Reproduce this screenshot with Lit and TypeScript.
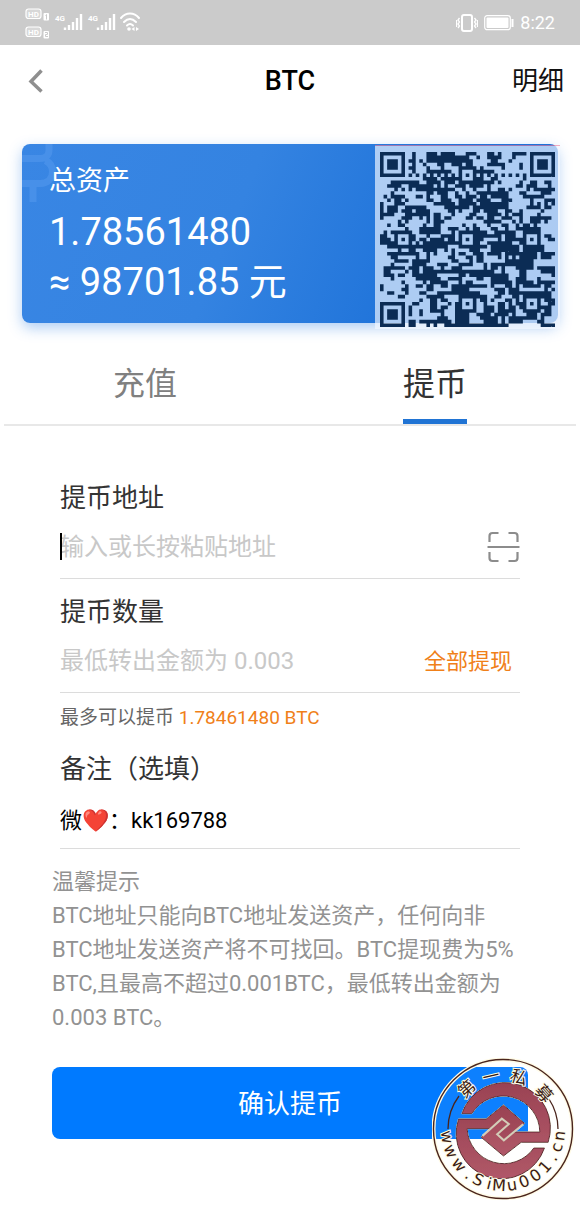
import { LitElement, html, svg, css } from "lit";
import { customElement, state } from "lit/decorators.js";

const QR_SIZE = 49;

/* Builds a version 8 style code: finders, timing, alignment marks and a data field. */
function buildCode(): string {
  const ring = (dx: number, dy: number) => Math.max(Math.abs(dx), Math.abs(dy));
  const finders = [[3, 3], [45, 3], [3, 45]];
  const marks = [[24, 6], [6, 24], [24, 24], [42, 24], [24, 42], [42, 42]];
  let seed = 20011;
  const next = () => {
    seed = (seed * 1103515245 + 12345) % 2147483648;
    return seed / 2147483648;
  };
  const field: boolean[][] = [];
  let d = "";
  for (let y = 0; y < QR_SIZE; y++) {
    field.push([]);
    for (let x = 0; x < QR_SIZE; x++) {
      const fresh = next() < 0.53;
      const pick = next();
      let data = fresh;
      if (pick < 0.25 && x > 0) data = field[y][x - 1];
      else if (pick < 0.45 && y > 0) data = field[y - 1][x];
      field[y].push(data);
      let on = data;
      if (x === 6 || y === 6) on = (x + y) % 2 === 0;
      for (const [cx, cy] of marks) {
        const r = ring(x - cx, y - cy);
        if (r <= 2) on = r !== 1;
      }
      for (const [cx, cy] of finders) {
        const r = ring(x - cx, y - cy);
        if (r <= 4) on = r === 3 || r <= 1;
      }
      if (on) d += `M${x} ${y}h1v1h-1z`;
    }
  }
  return d;
}

const CODE_PATH = buildCode();

/* Characters of the seal, each with its angle from the top in degrees. */
const SEAL_URL: [string, number][] = [
  ["w", -98], ["w", -113], ["w", -129], [".", -143], ["S", -154], ["i", -166], ["M", -176],
  ["u", -189], ["0", -202], ["0", -215], ["1", -228], [".", -240], ["c", -251], ["n", -263],
];
const SEAL_NAME: [string, number][] = [["第", -42], ["一", -13], ["私", 17], ["募", 49]];

@customElement("asset-card")
export class AssetCard extends LitElement {
  static styles = css`
    :host { display: block; }
    .card {
      position: relative;
      margin: 0 22px;
      padding: 18px 27px 16px;
      border-radius: 8px;
      color: #fff;
      background: linear-gradient(112deg, #3986e4 0%, #3483e1 40%, #2074da 72%, #1d71d8 100%);
      box-shadow: 0 5px 14px rgba(45, 125, 225, 0.38);
    }
    .coin { position: absolute; left: 0; top: 0; width: 36px; height: 60px; border-radius: 8px 0 0 0; }
    .caption { position: relative; margin: 0; font-size: 27px; line-height: 38px; font-weight: 400; }
    .amount { margin: 0; font-size: 38px; line-height: 50px; padding-top: 7px; }
    .amount + .amount { padding-top: 0; }
    .code {
      position: absolute;
      right: -2px;
      top: 1px;
      width: 185px;
      height: 184px;
      box-sizing: border-box;
      padding: 6px 5px 3px;
      border-top: 1px solid rgba(240, 120, 150, 0.6);
      background: rgba(243, 247, 255, 0.67) padding-box;
    }
    .code svg { display: block; width: 175px; height: 175px; }
  `;

  render() {
    return html`
      <section class="card">
        <svg class="coin" viewBox="0 0 36 60" aria-hidden="true">
          <g fill="none" stroke="#5a9df0" stroke-opacity="0.45" stroke-width="7">
            <path d="M0 14.500h18c6 0 9-4 9-8V0M0 39.500h18c8 0 12.500-5 12.500-12 0-6-3-9-7-11" />
            <path d="M11 43v15" />
          </g>
        </svg>
        <h2 class="caption">总资产</h2>
        <p class="amount">1.78561480</p>
        <p class="amount">≈ 98701.85 元</p>
        <div class="code">
          <svg viewBox="0 0 49 49" role="img" aria-label="QR" shape-rendering="geometricPrecision">
            <path d=${CODE_PATH} fill="#0b2c55" />
          </svg>
        </div>
      </section>
    `;
  }
}

@customElement("seal-mark")
export class SealMark extends LitElement {
  static styles = css`
    :host { display: block; width: 142px; height: 142px; }
    svg { display: block; width: 100%; height: 100%; }
    .tint { fill: #fffdf2; opacity: 0.05; }
    .url { font: 16px "DejaVu Sans", sans-serif; fill: #3a1a12; }
    .name { font: 400 17px "Noto Sans CJK SC", sans-serif; fill: #3a1a12; }
    .halo { stroke: #fffbe6; stroke-width: 2px; paint-order: stroke; }
  `;

  render() {
    return html`
      <svg viewBox="-71 -71 142 142" role="img" aria-label="第一私募 www.SiMu001.cn">
        <defs>
          <filter id="glow" x="-20%" y="-20%" width="140%" height="140%">
            <feDropShadow dx="0" dy="0" stdDeviation="1.5" flood-color="#fffbe0" flood-opacity="1" />
          </filter>
          <linearGradient id="metal" x1="0" y1="0" x2="0" y2="1">
            <stop offset="0" stop-color="#9a4253" />
            <stop offset="1" stop-color="#b05868" />
          </linearGradient>
        </defs>
        <circle class="tint" r="69.5" />
        <circle r="69.5" fill="none" stroke="#fffbe6" stroke-width="4" />
        <circle r="69.5" fill="none" stroke="#4a241c" stroke-width="1.4" />
        <g fill="none" stroke="#4a241c" stroke-width="1.3">
          <path d="M-55 0A55 55 0 0 1 -44 -33" />
          <path d="M55 0A55 55 0 0 0 46 -30" />
        </g>
        <g transform="translate(-48.5 -49) scale(.3333)" filter="url(#glow)">
          <g fill="url(#metal)" stroke="#5c2230" stroke-width="3">
            <path d="M22 101A136 136 0 0 1 281 187H200L147 228L80 172L108 146L142 116L163 132L128 163L148 180L178 156H256A110 110 0 0 0 52 101Z" />
            <path d="M12 117H95L147 75L210 130L148 180L128 163L163 132L142 116L108 146H38A110 110 0 0 0 238 204H270A136 136 0 0 1 12 117Z" />
          </g>
          <path d="M84 168L142 116L163 132L128 163L148 181L206 133" fill="none" stroke="#d3cdb8" stroke-width="6" />
        </g>
        ${SEAL_NAME.map(([c, a]) => svg`<text class="name halo" text-anchor="middle" transform="rotate(${a})" y="-48">${c}</text>`)}
        ${SEAL_URL.map(([c, a]) => svg`<text class="url halo" text-anchor="middle" transform="rotate(${a + 180})" y="62">${c}</text>`)}
      </svg>
    `;
  }
}

@customElement("app-root")
export class AppRoot extends LitElement {
  @state() private tab = "withdraw";

  static styles = css`
    :host {
      display: block;
      min-height: 100vh;
      background: #fff;
      color: #333;
      font-family: Roboto, "Noto Sans CJK SC", sans-serif;
      overflow: hidden;
    }
    button, input { font: inherit; color: inherit; background: none; border: 0; padding: 0; margin: 0; outline: 0; border-radius: 0; }
    button { cursor: pointer; }
    svg { display: block; }
    .status {
      display: flex;
      justify-content: space-between;
      align-items: center;
      height: 45px;
      padding: 0 25px;
      box-sizing: border-box;
      background: #cbcbcb;
      color: #fff;
    }
    .signals { width: 116px; height: 32px; }
    .tiny { font: 700 8px Roboto, sans-serif; fill: #fff; }
    .power { display: flex; align-items: center; gap: 6px; font-size: 18px; line-height: 24px; }
    .bar {
      display: grid;
      grid-template-columns: 1fr auto 1fr;
      align-items: center;
      height: 72px;
      padding: 0 16px;
    }
    .title { margin: 0; font-size: 27px; line-height: 36px; font-weight: 500; color: #000; }
    .back { justify-self: start; padding-left: 11px; }
    .detail { justify-self: end; font-size: 26px; line-height: 36px; color: #111; }
    .asset { margin-top: 27px; }
    .tabs { display: grid; grid-template-columns: 1fr 1fr; margin-top: 18px; }
    .tab { justify-self: center; height: 83px; padding-top: 4px; box-sizing: border-box; font-size: 32px; line-height: 78px; color: #808080; border-bottom: 5px solid transparent; }
    .tab.active { color: #333; border-bottom-color: #2074d4; }
    .rule { height: 2px; margin: 0 4px; border: 0; background: #e8e8e8; }
    .form { padding: 54px 60px 0; }
    .label { display: block; font-size: 26px; line-height: 36px; }
    .field { display: flex; align-items: center; position: relative; height: 62px; border-bottom: 1px solid #dcdcdc; font-size: 24px; }
    .field input { flex: 1; min-width: 0; width: 0; height: 40px; }
    .field input::placeholder { color: #c8c8c8; opacity: 1; }
    .caret { position: absolute; left: 0; top: 17px; width: 2px; height: 27px; background: #000; }
    .field + .label { margin-top: 15px; }
    .all { padding: 0 8px 4px 0; font-size: 22px; color: #f08019; }
    .hint { margin: 15px 0 23px; font-size: 19px; line-height: 20px; color: #666; }
    .hint b { font-weight: 400; color: #f08019; }
    .note { height: 61px; color: #000; font-size: 22px; }
    .tips { margin: 16px 52px 0; padding-right: 8px; font-size: 22px; line-height: 34px; color: #929292; }
    .tips p { margin: 0; }
    .footer { position: relative; padding: 32px 52px 0; }
    .submit { display: block; width: 100%; height: 72px; padding-bottom: 4px; border-radius: 8px; background: #007aff; color: #fff; font-size: 26px; }
    .seal { position: absolute; right: 6px; top: 23px; }
  `;

  private renderSignals() {
    const bars = (x: number) => svg`<path stroke="#fff" stroke-width="2.4" d="M${x} 23v-2.500M${x + 4} 23v-5M${x + 8} 23v-8M${x + 12} 23v-12M${x + 16} 23v-16" />`;
    return html`
      <svg class="signals" viewBox="0 0 116 32" aria-hidden="true">
        <g fill="#fff" fill-opacity=".25" stroke="#fff" stroke-width="1.200">
          <rect x="1" y="2" width="15" height="9.500" rx="2.500" />
          <rect x="1" y="20" width="15" height="9.500" rx="2.500" />
        </g>
        <g fill="#fff">
          <rect x="18.500" y="6" width="5.500" height="7.500" rx="1" />
          <rect x="18.500" y="24" width="5.500" height="7.500" rx="1" />
        </g>
        <text class="tiny" x="3" y="9.500">HD</text>
        <text class="tiny" x="3" y="27.500">HD</text>
        <path d="M20.500 8.500l1-1v5M20 25.500h2.500v2h-2v2h2.500" fill="none" stroke="#cbcbcb" />
        <text class="tiny" x="30" y="14">4G</text>
        <text class="tiny" x="63" y="14">4G</text>
        ${bars(40)} ${bars(73)}
        <g fill="none" stroke="#fff" stroke-width="2" stroke-linecap="round">
          <path d="M96 11c5-6 13-6 18 0M99 15c4-4 8-4 12 0M102 18.500c2-2 4-2 6 0" />
        </g>
        <circle cx="104" cy="22" r="1.800" fill="#fff" />
        <path d="M106.500 22l3-2v4zM114 22l-3-2v4z" fill="#fff" />
      </svg>
    `;
  }

  render() {
    return html`
      <div class="status">
        ${this.renderSignals()}
        <div class="power">
          <svg width="22" height="18" viewBox="0 0 22 18" fill="none" stroke="#fff" aria-hidden="true">
            <rect x="6" y="1" width="10" height="16" rx="2" stroke-width="2" />
            <path d="M3.500 4l-1.500 2 1.500 2-1.500 2 1.500 2-1.500 2M.5 6v7M18.500 4l1.500 2-1.500 2 1.500 2-1.500 2 1.500 2M21.500 6v7" stroke-width="1.300" />
          </svg>
          <svg width="30" height="16" viewBox="0 0 30 16" aria-hidden="true">
            <rect x=".7" y=".7" width="25.600" height="14" rx="2.500" fill="none" stroke="#fff" stroke-width="1.200" />
            <rect x="2.500" y="2.500" width="22" height="10.500" rx="1" fill="#fff" />
            <path d="M28.500 4v8" stroke="#fff" stroke-width="2" />
          </svg>
          <span>8:22</span>
        </div>
      </div>
      <header class="bar">
        <button class="back" aria-label="返回">
          <svg width="18" height="24" viewBox="0 0 18 24" fill="none" stroke="#8f8f8f" stroke-width="3.500">
            <path d="M14.500 1.500L4 12.500l10.500 10" />
          </svg>
        </button>
        <h1 class="title">BTC</h1>
        <button class="detail">明细</button>
      </header>
      <asset-card class="asset"></asset-card>
      <nav class="tabs">
        <button class="tab ${this.tab === "deposit" ? "active" : ""}" @click=${() => (this.tab = "deposit")}>充值</button>
        <button class="tab ${this.tab === "withdraw" ? "active" : ""}" @click=${() => (this.tab = "withdraw")}>提币</button>
      </nav>
      <hr class="rule" />
      <form class="form" @submit=${(e: Event) => e.preventDefault()}>
        <label class="label" for="address">提币地址</label>
        <div class="field">
          <input id="address" type="text" placeholder="输入或长按粘贴地址" />
          <span class="caret"></span>
          <button type="button" aria-label="扫码">
            <svg width="33" height="32" viewBox="0 0 33 32" fill="none" stroke="#8c8c8c" stroke-width="2.200">
              <path d="M2.500 11V5q0-3 3-3h6M21.500 2h6q3 0 3 3v6M2.500 21v6q0 3 3 3h6M21.500 30h6q3 0 3-3v-6M.5 16h32" />
            </svg>
          </button>
        </div>
        <label class="label" for="quantity">提币数量</label>
        <div class="field">
          <input id="quantity" type="text" placeholder="最低转出金额为 0.003" />
          <button type="button" class="all">全部提现</button>
        </div>
        <p class="hint">最多可以提币 <b>1.78461480 BTC</b></p>
        <label class="label" for="note">备注（选填）</label>
        <div class="field note">
          <input id="note" type="text" .value=${"微❤️：kk169788"} />
        </div>
      </form>
      <section class="tips">
        <p>温馨提示</p>
        <p>BTC地址只能向BTC地址发送资产，任何向非BTC地址发送资产将不可找回。BTC提现费为5% BTC,且最高不超过0.001BTC，最低转出金额为0.003 BTC。</p>
      </section>
      <div class="footer">
        <button class="submit">确认提币</button>
        <seal-mark class="seal"></seal-mark>
      </div>
    `;
  }
}
